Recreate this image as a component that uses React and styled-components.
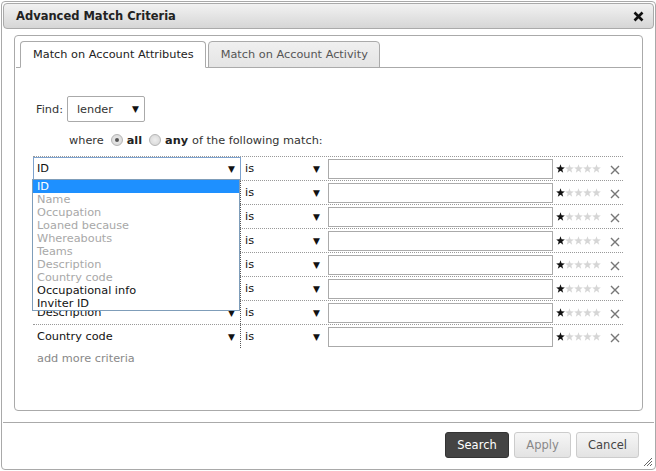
import React from 'react';
import styled, { createGlobalStyle } from 'styled-components';

const GlobalStyle = createGlobalStyle`
    body {
        margin: 0;
        background: #fff;
        font-family: 'DejaVu Sans', Verdana, sans-serif;
        font-size: 11.3px;
        color: #222;
    }
`;

const Dialog = styled.div`
    position: relative;
    box-sizing: border-box;
    width: 655px;
    height: 469px;
    margin: 1px 0 0 1px;
    padding: 1px;
    border: 1px solid #a9a9a9;
    border-radius: 4px;
    display: flex;
    flex-direction: column;
    background: #fff;
`;

const TitleBar = styled.div`
    box-sizing: border-box;
    height: 26px;
    border: 1px solid #aaa;
    border-radius: 4px;
    background: linear-gradient(#f2f2f2, #d6d6d6);
    display: flex;
    align-items: center;
    justify-content: space-between;
    padding: 0 9px 0 12px;
    font-weight: bold;
    font-size: 11.5px;
    color: #222;
`;

const Body = styled.div`
    padding: 6px 11px 0 11px;
`;

const Panel = styled.div`
    position: relative;
    box-sizing: border-box;
    height: 376px;
    border: 1px solid #aaa;
    border-radius: 4px;
    padding-top: 5px;
`;

const TabBar = styled.div`
    display: flex;
    gap: 2px;
    margin: 0 1px;
    padding-left: 4px;
    border-bottom: 1px solid #aaa;
    height: 26px;
`;

const Tab = styled.div`
    box-sizing: border-box;
    height: 27px;
    padding: 0 11px 0 12px;
    display: flex;
    align-items: center;
    border: 1px solid #aaa;
    border-bottom: ${(p) => (p.active ? '1px solid #fff' : '1px solid #aaa')};
    border-radius: 4px 4px 0 0;
    background: ${(p) => (p.active ? '#fff' : 'linear-gradient(#f0f0f0, #e4e4e4)')};
    color: ${(p) => (p.active ? '#222' : '#555')};
`;

const FindRow = styled.div`
    display: flex;
    align-items: center;
    gap: 4px;
    margin: 28px 0 0 21px;
    color: #333;
`;

const FindSelect = styled.div`
    box-sizing: border-box;
    width: 78px;
    height: 26px;
    border: 1px solid #aaa;
    border-radius: 2px;
    display: flex;
    align-items: center;
    justify-content: space-between;
    padding: 0 5px 0 9px;
`;

const Arrow = styled.span`
    font-size: 9px;
    color: #111;
`;

const WhereRow = styled.div`
    display: flex;
    align-items: center;
    margin: 8px 0 0 54px;
    height: 20px;
    color: #333;
    gap: 4px;
`;

const Radio = styled.span`
    box-sizing: border-box;
    width: 12px;
    height: 12px;
    border-radius: 50%;
    border: 1px solid #b5b5b5;
    background: radial-gradient(circle, #eee, #d4d4d4);
    display: inline-flex;
    align-items: center;
    justify-content: center;
    margin-left: 3px;
    &::after {
        content: '';
        width: 4px;
        height: 4px;
        border-radius: 50%;
        background: ${(p) => (p.checked ? '#555' : 'transparent')};
    }
`;

const Bold = styled.b`
    color: #222;
`;

const Criteria = styled.div`
    position: relative;
    margin: 6px 0 0 18px;
    width: 590px;
`;

const Row = styled.div`
    display: flex;
    align-items: center;
    height: 24px;
    border-top: 1px dotted #999;
    box-sizing: border-box;
    &:last-of-type {
        border-bottom: 1px dotted #999;
        height: 25px;
    }
`;

const FieldCell = styled.div`
    box-sizing: border-box;
    width: 208px;
    height: 100%;
    border-right: 1px dotted #555;
    display: flex;
    align-items: center;
    justify-content: space-between;
    padding: 0 5px 0 4px;
    color: #111;
    outline: ${(p) => (p.focused ? '1px solid #7da2ce' : 'none')};
    outline-offset: -1px;
`;

const OpCell = styled.div`
    box-sizing: border-box;
    width: 87px;
    display: flex;
    align-items: center;
    justify-content: space-between;
    padding: 0 8px 0 4px;
    color: #111;
`;

const ValueInput = styled.div`
    box-sizing: border-box;
    width: 225px;
    height: 20px;
    border: 1px solid #aaa;
`;

const Stars = styled.div`
    display: flex;
    margin-left: 3px;
    width: 50px;
`;

const Remove = styled.div`
    margin-left: 4px;
    display: flex;
    align-items: center;
    padding-top: 3px;
`;

const DropList = styled.div`
    position: absolute;
    left: -1px;
    top: 23px;
    width: 208px;
    box-sizing: border-box;
    border: 1px solid #7f9db9;
    background: #fff;
    z-index: 2;
`;

const Option = styled.div`
    height: 13px;
    line-height: 13px;
    padding-left: 4px;
    background: ${(p) => (p.selected ? '#1e90ff' : '#fff')};
    color: ${(p) => (p.selected ? '#fff' : p.disabled ? '#a8a8a8' : '#111')};
`;

const AddMore = styled.div`
    margin: 4px 0 0 22px;
    color: #888;
`;

const Separator = styled.div`
    margin-top: 11px;
    border-top: 1px solid #aaa;
`;

const Footer = styled.div`
    display: flex;
    justify-content: flex-end;
    gap: 5px;
    padding: 9px 15px 0 0;
`;

const Button = styled.button`
    box-sizing: border-box;
    height: 26px;
    width: ${(p) => p.w}px;
    border-radius: 3px;
    font-family: inherit;
    font-size: 11.5px;
    border: 1px solid ${(p) => (p.primary ? '#333' : '#ccc')};
    background: ${(p) => (p.primary ? '#444' : 'linear-gradient(#f6f6f6, #e3e3e3)')};
    color: ${(p) => (p.primary ? '#fff' : p.dim ? '#888' : '#444')};
    padding: 0;
`;

const Grip = styled.svg`
    position: absolute;
    right: 2px;
    bottom: 2px;
`;

const Star = ({ filled }) => (
    <svg width="9" height="9" viewBox="0 0 10 10">
        <path
            d="M5 0.3 L6.2 3.7 L9.8 3.8 L7 6 L8 9.6 L5 7.5 L2 9.6 L3 6 L0.2 3.8 L3.8 3.7 Z"
            fill={filled ? '#111' : '#d6d6d6'}
        />
    </svg>
);

const fields = ['ID', 'Name', 'Occupation', 'Loaned because', 'Whereabouts', 'Teams', 'Description', 'Country code'];
const options = [
    { label: 'ID', selected: true },
    { label: 'Name', disabled: true },
    { label: 'Occupation', disabled: true },
    { label: 'Loaned because', disabled: true },
    { label: 'Whereabouts', disabled: true },
    { label: 'Teams', disabled: true },
    { label: 'Description', disabled: true },
    { label: 'Country code', disabled: true },
    { label: 'Occupational info' },
    { label: 'Inviter ID' },
];

export default function App() {
    return (
        <>
            <GlobalStyle />
            <Dialog>
                <TitleBar>
                    <span>Advanced Match Criteria</span>
                    <svg width="11" height="11" viewBox="0 0 11 11">
                        <path d="M1.5 1.5 L9.5 9.5 M9.5 1.5 L1.5 9.5" stroke="#111" strokeWidth="2.6" />
                    </svg>
                </TitleBar>
                <Body>
                    <Panel>
                        <TabBar>
                            <Tab active>Match on Account Attributes</Tab>
                            <Tab>Match on Account Activity</Tab>
                        </TabBar>
                        <FindRow>
                            Find:
                            <FindSelect>
                                lender <Arrow>▼</Arrow>
                            </FindSelect>
                        </FindRow>
                        <WhereRow>
                            where <Radio checked /> <Bold>all</Bold> <Radio /> <Bold>any</Bold> of the following match:
                        </WhereRow>
                        <Criteria>
                            {fields.map((f, i) => (
                                <Row key={i}>
                                    <FieldCell focused={i === 0}>
                                        {f} <Arrow>▼</Arrow>
                                    </FieldCell>
                                    <OpCell>
                                        is <Arrow>▼</Arrow>
                                    </OpCell>
                                    <ValueInput />
                                    <Stars>
                                        <Star filled />
                                        <Star />
                                        <Star />
                                        <Star />
                                        <Star />
                                    </Stars>
                                    <Remove>
                                        <svg width="10" height="10" viewBox="0 0 10 10">
                                            <path d="M1 1 L9 9 M9 1 L1 9" stroke="#777" strokeWidth="1.4" />
                                        </svg>
                                    </Remove>
                                </Row>
                            ))}
                            <DropList>
                                {options.map((o) => (
                                    <Option key={o.label} selected={o.selected} disabled={o.disabled}>
                                        {o.label}
                                    </Option>
                                ))}
                            </DropList>
                        </Criteria>
                        <AddMore>add more criteria</AddMore>
                    </Panel>
                </Body>
                <Separator />
                <Footer>
                    <Button primary w={64}>Search</Button>
                    <Button dim w={57}>Apply</Button>
                    <Button w={63}>Cancel</Button>
                </Footer>
                <Grip width="11" height="11" viewBox="0 0 11 11">
                    <path d="M10 2 L2 10 M10 5 L5 10 M10 8 L8 10" stroke="#666" strokeWidth="1" />
                </Grip>
            </Dialog>
        </>
    );
}
